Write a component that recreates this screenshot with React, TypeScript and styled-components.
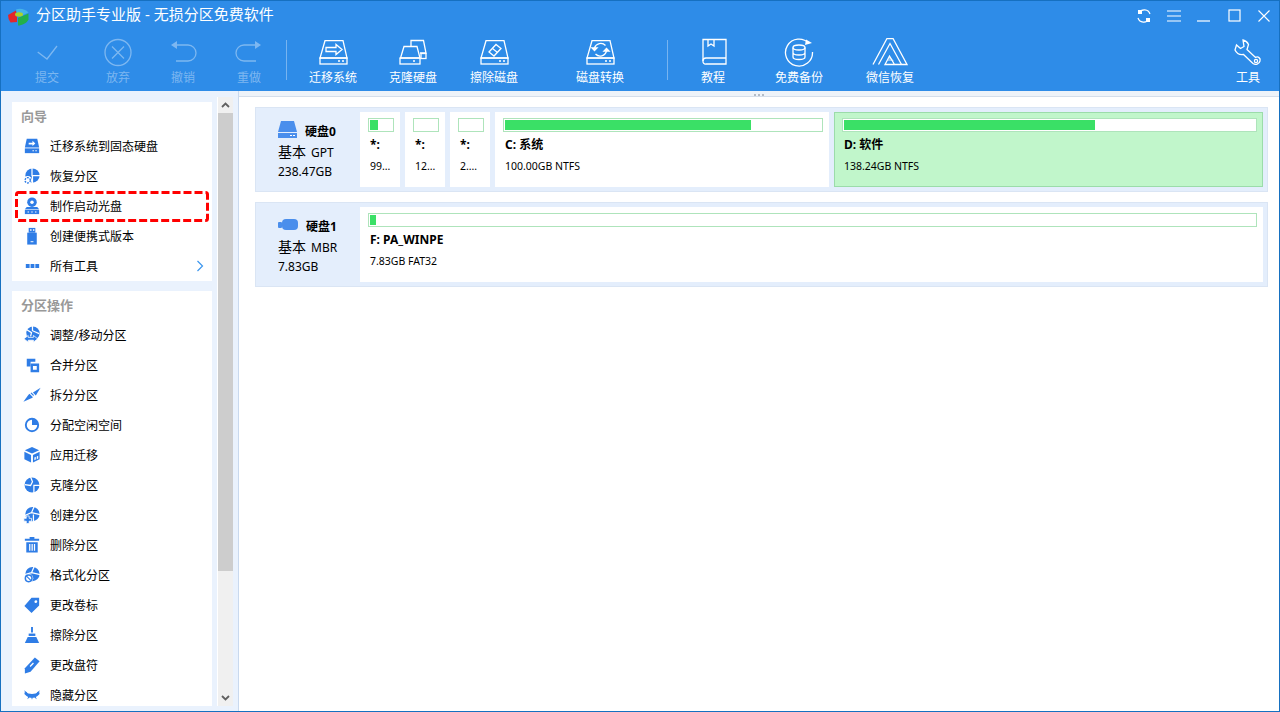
import React from 'react';
import styled, { createGlobalStyle } from 'styled-components';

const FONT = '"Noto Sans", "Noto Sans CJK SC", sans-serif';
const BLUE = '#2e8ce8';
const ICON = '#2f7de6';

const GlobalStyle = createGlobalStyle`
  html, body { margin: 0; padding: 0; height: 100%; overflow: hidden; }
  #root { height: 100%; }
  body { font-family: ${FONT}; font-size: 12px; color: #000; }
  * { box-sizing: border-box; }
`;

const Win = styled.div`
  width: 1280px;
  height: 712px;
  display: flex;
  flex-direction: column;
  border: 1px solid #1670c0;
  overflow: hidden;
`;
const Header = styled.header`
  height: 90px;
  flex: none;
  background: ${BLUE};
  display: flex;
  flex-direction: column;
`;
const TitleBar = styled.div`
  height: 29px;
  display: flex;
  align-items: center;
  padding: 0 0 0 6px;
`;
const Logo = styled.svg`
  width: 22px;
  height: 18px;
  margin: 3px 7px 0 0;
`;
const Title = styled.div`
  color: #fff;
  font-size: 15px;
  flex: 1;
  white-space: pre;
  margin-bottom: 5px;
`;
const WinBtn = styled.button`
  width: 30px;
  height: 28px;
  padding: 0;
  border: 0;
  background: none;
  display: flex;
  align-items: center;
  justify-content: center;
`;
const Toolbar = styled.div`
  flex: 1;
  display: flex;
  padding: 0 1px 0 11px;
  align-items: flex-start;
`;
const Tool = styled.div<{ $w: number; $off?: boolean; $end?: boolean }>`
  width: ${p => p.$w}px;
  flex: none;
  display: flex;
  flex-direction: column;
  align-items: center;
  color: ${p => (p.$off ? 'rgba(255,255,255,.38)' : '#fff')};
  margin-left: ${p => (p.$end ? 'auto' : '0')};
  font-size: 12px;
  svg { display: block; margin-top: 8px; }
`;
const ToolLabel = styled.span`
  line-height: 16px;
  margin-top: 2px;
`;
const Sep = styled.div<{ $ml?: number }>`
  width: 1px;
  height: 40px;
  margin: 10px 0 0 ${p => p.$ml || 0}px;
  background: rgba(255, 255, 255, 0.35);
  flex: none;
`;
const Body = styled.div`
  flex: 1;
  min-height: 0;
  display: flex;
`;
const Sidebar = styled.aside`
  width: 238px;
  flex: none;
  background: #eaf2fd;
  border-right: 1px solid #c9d9ee;
  display: flex;
  padding: 6px 5px 5px 11px;
`;
const Cards = styled.div`
  width: 200px;
  flex: none;
  padding-top: 5px;
  margin-right: 5px;
  display: flex;
  flex-direction: column;
  gap: 10px;
  min-height: 0;
`;
const Card = styled.section<{ $fill?: boolean }>`
  background: #fff;
  flex: ${p => (p.$fill ? '1' : 'none')};
  min-height: 0;
  overflow: hidden;
`;
const CardTitle = styled.div`
  height: 29px;
  line-height: 28px;
  padding-left: 9px;
  color: #999;
  font-size: 13px;
  font-weight: 700;
`;
const Row = styled.div`
  position: relative;
  height: 30px;
  display: flex;
  align-items: center;
  gap: 8px;
  padding: 0 8px 0 10px;
  white-space: nowrap;
`;
const RowIcon = styled.svg`
  width: 20px;
  height: 20px;
  flex: none;
  fill: ${ICON};
`;
const Marker = styled.svg`
  position: absolute;
  left: 3px;
  top: 0;
`;
const More = styled.svg`
  margin-left: auto;
`;
const Scroll = styled.div`
  width: 16px;
  flex: none;
  display: flex;
  flex-direction: column;
  background: #f0f0f0;
  border-left: 1px solid #fff;
`;
const ScrollBtn = styled.div`
  height: 16px;
  flex: none;
  display: flex;
  align-items: center;
  justify-content: center;
`;
const Thumb = styled.div`
  height: 458px;
  flex: none;
  background: #cdcdcd;
`;
const ScrollTrack = styled.div`
  flex: 1;
`;
const Main = styled.main`
  flex: 1;
  min-width: 0;
  background: #fff;
  display: flex;
  flex-direction: column;
`;
const Grip = styled.div`
  height: 6px;
  flex: none;
  background: #eef3f9;
  border-bottom: 1px solid #d5deea;
  display: flex;
  align-items: center;
  justify-content: center;
  gap: 2px;
  padding-top: 2px;
  i {
    width: 2px;
    height: 2px;
    background: #b4bcc6;
  }
`;
const Disks = styled.div`
  padding: 10px 11px 0 16px;
  display: flex;
  flex-direction: column;
  gap: 10px;
`;
const DiskRow = styled.div`
  height: 85px;
  background: #e4eefc;
  border: 1px solid #dae5f4;
  padding: 4px;
  display: flex;
`;
const DiskInfo = styled.div`
  width: 100px;
  flex: none;
  padding: 7px 0 0 18px;
  line-height: 19px;
  white-space: nowrap;
`;
const DiskName = styled.div`
  display: flex;
  align-items: center;
  gap: 8px;
  height: 21px;
  b {
    font-size: 12px;
    margin-top: 4px;
  }
`;
const DiskType = styled.div`
  margin-top: 2px;
  font-size: 12px;
  & + & {
    margin-top: 0;
  }
  span {
    font-size: 14px;
    margin-right: 5px;
  }
`;
const Parts = styled.div`
  flex: 1;
  min-width: 0;
  display: flex;
  gap: 5px;
`;
const Part = styled.div<{ $w?: number; $selected?: boolean }>`
  flex: ${p => (p.$w ? `0 0 ${p.$w}px` : '1')};
  background: ${p => (p.$selected ? '#c1f6cb' : '#fff')};
  border: ${p => (p.$selected ? '1px solid #9bdcaa' : '0')};
  padding: ${p => (p.$selected ? '5px 5px 0 7px' : '6px 6px 0 8px')};
  min-width: 0;
`;
const Bar = styled.div`
  height: 14px;
  border: 1px solid #aee4bb;
  background: #fff;
  padding: 1px;
`;
const Fill = styled.div`
  height: 100%;
  background: #3ae066;
`;
const PartName = styled.div`
  margin: 5px 0 0 2px;
  line-height: 16px;
  font-weight: 700;
  font-size: 12px;
  white-space: nowrap;
`;
const PartSize = styled.div`
  margin: 5px 0 0 2px;
  line-height: 16px;
  font-size: 10.5px;
  white-space: nowrap;
`;

const S = { fill: 'none', stroke: 'currentColor', strokeWidth: 1.3 };

const DiskShell = ({ children }: { children?: React.ReactNode }) => (
  <svg width="32" height="30" viewBox="0 0 32 30" {...S}>
    <path d="M8 2.700H26L30 20H3Z" />
    <rect x="3" y="20" width="27" height="6" />
    <path d="M21 23h2M25 23h2" />
    {children}
  </svg>
);

const toolIcons: Record<string, React.ReactNode> = {
  check: <svg width="32" height="30" viewBox="0 0 32 30" {...S}><path d="M6.700 14L16 21L26 8" /></svg>,
  cancel: <svg width="32" height="30" viewBox="0 0 32 30" {...S}><circle cx="16" cy="14.500" r="13" /><path d="M10 8.500L22 20.500M22 8.500L10 20.500" /></svg>,
  undo: <svg width="32" height="30" viewBox="0 0 32 30" {...S}><path d="M10 7H21a8 8 0 0 1 0 16H9" /><path d="M4 7L10 3V11Z" fill="currentColor" stroke="none" /></svg>,
  redo: <svg width="32" height="30" viewBox="0 0 32 30" {...S}><path d="M22 7H11a8 8 0 0 0 0 16H23" /><path d="M28 7L22 3V11Z" fill="currentColor" stroke="none" /></svg>,
  migrate: <DiskShell><path d="M9 9.500H19V6.500L25 11.500L19 16.500V13.500H9Z" /></DiskShell>,
  clone: (
    <svg width="32" height="30" viewBox="0 0 32 30" {...S}>
      <path d="M7 8.500H20L23 20H3.500Z" />
      <rect x="3" y="20" width="20" height="6" />
      <path d="M16 23h2" />
      <path d="M14 8V2.500H26.500L29 15H23" />
      <rect x="24" y="15.500" width="5" height="5" />
    </svg>
  ),
  wipe: <DiskShell><path d="M11 14L18 6.500L23 10.500L16 18Z" /><path d="M14.500 10.500L19.500 14.500" /></DiskShell>,
  convert: <DiskShell><path d="M10.500 10a6.500 6.500 0 0 1 11-2.500M22.500 13a6.500 6.500 0 0 1-11 3" /><path d="M8 10h5l-2.500 2.500ZM25 13h-5l2.500-2.500Z" fill="currentColor" /></DiskShell>,
  book: <svg width="32" height="30" viewBox="0 0 32 30" {...S}><path d="M8 1.500H29V26H9a2.500 2.500 0 0 1-3-3V1.500Z" /><path d="M11 1.500V8l3-2 3 2V1.500M29 20H9a3 3 0 0 0-3 3" /></svg>,
  backup: (
    <svg width="32" height="30" viewBox="0 0 32 30" {...S}>
      <path d="M26 5.500A13.500 13.500 0 1 0 29.500 14" />
      <path d="M23 1.500L29 5L22 7Z" fill="currentColor" stroke="none" />
      <ellipse cx="16" cy="9.500" rx="6" ry="2.500" />
      <path d="M10 9.500V19c0 1.500 2.500 2.500 6 2.500s6-1 6-2.500V9.500M10 14.500c0 1.500 2.500 2.500 6 2.500s6-1 6-2.500" />
    </svg>
  ),
  wechat: (
    <svg width="36" height="30" viewBox="0 0 36 30" {...S}>
      <path d="M1 26.500L15 0.500H21L35 26.500H13L17.500 18L22.500 26.500" />
      <path d="M6.500 26.500L18 5.500L29.500 26.500" />
      <path d="M17.500 18L22 23H15.500Z" fill="currentColor" fillOpacity="0.45" stroke="none" />
    </svg>
  ),
  tools: <svg width="32" height="30" viewBox="0 0 32 30" {...S}><path d="M11 2a8 8 0 0 1 5.500 4.500L15 11.500l8.500 8a3 3 0 0 1 4.500 3.500a4.500 4.500 0 0 1-7 2.500L11.500 16.500A8 8 0 0 1 3 12L4.500 7l4 3.500L12 8.500Z" /><circle cx="24" cy="23" r="1.600" /></svg>,
};

const Crack = ({ d }: { d: string }) => <path d={d} fill="none" stroke="#fff" strokeWidth="1.300" />;

const rowIcons: Record<string, React.ReactNode> = {
  migrate: <><path d="M5 3H16L18 12H3Z" /><rect x="3" y="13" width="15" height="5" /><path d="M7 7H11V5L14 7.800L11 10.500V9H7Z" fill="#fff" /><path d="M11 15h1.500v1H11ZM14 15h1.500v1H14Z" fill="#fff" /></>,
  recover: <><circle cx="11" cy="10" r="7.500" /><Crack d="M10.500 2V10H19M11 10V18" /><circle cx="6" cy="15" r="4.500" fill="#fff" /><circle cx="6" cy="15" r="2.800" fill="none" stroke={ICON} strokeWidth="1.500" strokeDasharray="2 1" /></>,
  boot: <><circle cx="10.500" cy="6.500" r="5" /><circle cx="10.500" cy="6.500" r="1.800" fill="#fff" /><path d="M5 11.500H16L18 14H3Z" /><rect x="3" y="14.500" width="15" height="4.500" /><path d="M6 16h1v1.500H6ZM10 16h1v1.500h-1ZM14 16h1v1.500h-1Z" fill="#fff" /></>,
  usb: <><path d="M7 2h7v5h-7Z" /><path d="M8.500 3.500h1.500v1.500h-1.500ZM11.500 3.500h1.500v1.500h-1.500Z" fill="#fff" /><rect x="5.500" y="7" width="10" height="12.500" /><rect x="9" y="16" width="3" height="1" fill="#fff" /></>,
  more: <path d="M4 8.500h4v4H4ZM9 8.500h4v4H9ZM14 8.500h4v4h-4Z" />,
  resize: <><circle cx="11.500" cy="8.500" r="7" /><Crack d="M5 5L10 8L9 12M11 1V6L18 9" /><path d="M2 14.500L6.500 11V13H12V11L16.500 14.500L12 18V16H6.500V18Z" stroke="#fff" strokeWidth="0.800" /></>,
  merge: <><path d="M5 4h9v3h-5v5H5Z" /><path d="M9 9H18V18H9ZM11.500 11.500V15.500H15.500V11.500Z" fillRule="evenodd" /></>,
  split: <><path d="M1.500 17.500L7 10L10 8L12.500 10.500L11 13.500Z" /><path d="M11.500 8L19.500 3L14.500 11Z" /><Crack d="M6.500 7L13.500 14" /></>,
  alloc: <><circle cx="10.500" cy="10.500" r="6.500" fill="none" stroke={ICON} strokeWidth="2" /><path d="M10.500 10.500V4A6.500 6.500 0 0 1 17 10.500Z" /></>,
  app: <><path d="M10.500 2L18 5.500L10.500 9L3 5.500Z" /><path d="M2.500 7L9.500 10.500V18.500L2.500 15Z" /><path d="M18.500 7L11.500 10.500V18.500L18.500 15Z" /><path d="M13 13l1.500-.7v3l-1.500.7ZM15.500 12l1.500-.7v3l-1.500.7Z" fill="#fff" /></>,
  clone: <><circle cx="10.500" cy="10.500" r="7.800" /><Crack d="M9 2L11 7L9 11L3 10M19 11H12.500V19" /></>,
  create: <><circle cx="11" cy="9.500" r="7.500" /><Crack d="M13 1L10 8L3 11M10 8L19 10M12 10V17" /><path d="M4.500 11.500H7.500V14H10V17H7.500V19.500H4.500V17H2V14H4.500Z" stroke="#fff" strokeWidth="0.800" /></>,
  delete: <><path d="M8 2H13V4H18V6H3V4H8Z" /><path d="M4.500 7.500H16.500V18.500H4.500ZM7.500 9.500V16.500H8.800V9.500ZM10 9.500V16.500H11.300V9.500ZM12.500 9.500V16.500H13.800V9.500Z" fillRule="evenodd" /></>,
  format: <><circle cx="11" cy="9.500" r="7.500" /><Crack d="M13 1L10 8L3 10M10 8L19 10" /><circle cx="7" cy="14" r="4.800" fill="#fff" /><circle cx="7" cy="14" r="3.500" fill="none" stroke={ICON} strokeWidth="1.600" /><path d="M4.500 11.500L9.500 16.500" stroke={ICON} strokeWidth="1.200" /></>,
  label: <path d="M10 3H18V11L10 19L2.500 11.500ZM14.500 5.500A1.500 1.500 0 1 0 14.600 8.500A1.500 1.500 0 0 0 14.500 5.500Z" fillRule="evenodd" />,
  wipe: <><path d="M9.500 2h2v6h-2Z" /><path d="M7 9h7v2.500H7Z" /><path d="M6 12.500h9L18 19H3Z" /></>,
  letter: <><path d="M13.500 2.500L18.500 6.500L9 17.500L3 19.500L3 14Z" /><path d="M8 11.500l3.500-3.500 1 1-3.500 3.500Z" fill="#fff" /></>,
  hide: <><path d="M3 7Q10.500 12 18 7L18.500 9.500Q16 12 14.500 12.500L15.500 15L13 13.200Q12 13.500 11.200 13.500L10.500 15.500L9.800 13.500Q9 13.500 8 13.200L5.500 15L6.500 12.500Q5 12 2.500 9.500Z" /><path d="M2 5.500L5.500 8L4.500 9.500ZM19 5.500L15.500 8L16.500 9.500Z" /></>,
};

const wizard = [
  { icon: 'migrate', text: '迁移系统到固态硬盘' },
  { icon: 'recover', text: '恢复分区' },
  { icon: 'boot', text: '制作启动光盘', marked: true },
  { icon: 'usb', text: '创建便携式版本' },
  { icon: 'more', text: '所有工具', more: true },
];
const operations = [
  { icon: 'resize', text: '调整/移动分区' },
  { icon: 'merge', text: '合并分区' },
  { icon: 'split', text: '拆分分区' },
  { icon: 'alloc', text: '分配空闲空间' },
  { icon: 'app', text: '应用迁移' },
  { icon: 'clone', text: '克隆分区' },
  { icon: 'create', text: '创建分区' },
  { icon: 'delete', text: '删除分区' },
  { icon: 'format', text: '格式化分区' },
  { icon: 'label', text: '更改卷标' },
  { icon: 'wipe', text: '擦除分区' },
  { icon: 'letter', text: '更改盘符' },
  { icon: 'hide', text: '隐藏分区' },
];

type Item = { icon: string; text: string; marked?: boolean; more?: boolean };

const SideRow = ({ item }: { item: Item }) => (
  <Row>
    <RowIcon viewBox="0 0 21 21">{rowIcons[item.icon]}</RowIcon>
    {item.text}
    {item.more && (
      <More width="8" height="12" viewBox="0 0 8 12" fill="none" stroke="#3c96ee" strokeWidth="1.200">
        <path d="M1.500 1L6.500 6L1.500 11" />
      </More>
    )}
    {item.marked && (
      <Marker width="194" height="31" viewBox="0 0 194 31" fill="none" stroke="#f00" strokeWidth="3">
        <rect x="1.500" y="1.500" width="191" height="28" rx="2" strokeDasharray="8 3" />
      </Marker>
    )}
  </Row>
);

const PartBox = ({ w, pct, name, size, selected }: { w?: number; pct: number; name: string; size: string; selected?: boolean }) => (
  <Part $w={w} $selected={selected}>
    <Bar>
      {pct > 0 && <Fill style={{ width: `${pct}%` }} />}
    </Bar>
    <PartName>{name}</PartName>
    <PartSize>{size}</PartSize>
  </Part>
);

const Chevron = ({ up }: { up?: boolean }) => (
  <svg width="9" height="6" viewBox="0 0 9 6" fill="none" stroke="#606060" strokeWidth="1.800">
    <path d={up ? 'M1 5L4.500 1.500L8 5' : 'M1 1L4.500 4.500L8 1'} />
  </svg>
);

export default function App() {
  return (
    <Win>
      <GlobalStyle />
      <Header>
        <TitleBar>
          <Logo viewBox="0 0 22 18">
            <path d="M1 7L9 2.500L10 10L10 14L3.500 14.500Q1 11 1 7Z" fill="#e3262a" />
            <path d="M9 1.500C13 0 18 1 21.500 4.500L14 8L10 5Z" fill="#45b4e8" />
            <ellipse cx="12" cy="6.500" rx="4" ry="2.200" fill="#a8d42c" />
            <path d="M11 10L21.500 5.500V11.500C20 15 15 17.500 11 17.500Z" fill="#22b04a" />
          </Logo>
          <Title>分区助手专业版 - 无损分区免费软件</Title>
          <WinBtn>
            <svg width="16" height="16" viewBox="0 0 16 16" fill="none" stroke="#fff" strokeWidth="1.200">
              <path d="M3 5A6 6 0 0 1 14 6M13 11A6 6 0 0 1 2 10" />
              <path d="M2 2h4v4H2ZM10 10h4v4h-4Z" fill="#fff" stroke="none" />
            </svg>
          </WinBtn>
          <WinBtn>
            <svg width="14" height="12" viewBox="0 0 14 12" stroke="#fff" strokeWidth="1.200"><path d="M0 1H14M0 6H14M0 11H14" /></svg>
          </WinBtn>
          <WinBtn>
            <svg width="14" height="14" viewBox="0 0 14 14" stroke="#fff" strokeWidth="1.200"><path d="M0 12H13" /></svg>
          </WinBtn>
          <WinBtn>
            <svg width="13" height="13" viewBox="0 0 13 13" fill="none" stroke="#fff" strokeWidth="1.200"><rect x="1" y="1" width="11" height="11" /></svg>
          </WinBtn>
          <WinBtn>
            <svg width="12" height="12" viewBox="0 0 12 12" stroke="#fff" strokeWidth="1.100"><path d="M0.500 0.500L11.500 11.500M11.500 0.500L0.500 11.500" /></svg>
          </WinBtn>
        </TitleBar>
        <Toolbar>
          <Tool $w={70} $off>{toolIcons.check}<ToolLabel>提交</ToolLabel></Tool>
          <Tool $w={72} $off>{toolIcons.cancel}<ToolLabel>放弃</ToolLabel></Tool>
          <Tool $w={58} $off>{toolIcons.undo}<ToolLabel>撤销</ToolLabel></Tool>
          <Tool $w={74} $off>{toolIcons.redo}<ToolLabel>重做</ToolLabel></Tool>
          <Sep />
          <Tool $w={92}>{toolIcons.migrate}<ToolLabel>迁移系统</ToolLabel></Tool>
          <Tool $w={68}>{toolIcons.clone}<ToolLabel>克隆硬盘</ToolLabel></Tool>
          <Tool $w={94}>{toolIcons.wipe}<ToolLabel>擦除磁盘</ToolLabel></Tool>
          <Tool $w={118}>{toolIcons.convert}<ToolLabel>磁盘转换</ToolLabel></Tool>
          <Sep $ml={8} />
          <Tool $w={90}>{toolIcons.book}<ToolLabel>教程</ToolLabel></Tool>
          <Tool $w={82}>{toolIcons.backup}<ToolLabel>免费备份</ToolLabel></Tool>
          <Tool $w={100}>{toolIcons.wechat}<ToolLabel>微信恢复</ToolLabel></Tool>
          <Tool $w={60} $end>{toolIcons.tools}<ToolLabel>工具</ToolLabel></Tool>
        </Toolbar>
      </Header>
      <Body>
        <Sidebar>
          <Cards>
            <Card>
              <CardTitle>向导</CardTitle>
              {wizard.map(item => <SideRow key={item.text} item={item} />)}
            </Card>
            <Card $fill>
              <CardTitle>分区操作</CardTitle>
              {operations.map(item => <SideRow key={item.text} item={item} />)}
            </Card>
          </Cards>
          <Scroll>
            <ScrollBtn><Chevron up /></ScrollBtn>
            <Thumb />
            <ScrollTrack />
            <ScrollBtn><Chevron /></ScrollBtn>
          </Scroll>
        </Sidebar>
        <Main>
          <Grip><i /><i /><i /></Grip>
          <Disks>
            <DiskRow>
              <DiskInfo>
                <DiskName>
                  <svg width="19" height="17" viewBox="0 0 19 17" fill="#4a8eec">
                    <path d="M3 0H16L19 11H0Z" /><rect x="0" y="12" width="19" height="5" />
                    <path d="M12 14h2v1h-2ZM15 14h2v1h-2Z" fill="#fff" />
                  </svg>
                  <b>硬盘0</b>
                </DiskName>
                <DiskType><span>基本</span>GPT</DiskType>
                <DiskType>238.47GB</DiskType>
              </DiskInfo>
              <Parts>
                <PartBox w={40} pct={36} name="*:" size="99…" />
                <PartBox w={40} pct={0} name="*:" size="12…" />
                <PartBox w={40} pct={0} name="*:" size="2.…" />
                <PartBox w={334} pct={78} name="C: 系统" size="100.00GB NTFS" />
                <PartBox pct={61} name="D: 软件" size="138.24GB NTFS" selected />
              </Parts>
            </DiskRow>
            <DiskRow>
              <DiskInfo>
                <DiskName>
                  <svg width="20" height="12" viewBox="0 0 20 12" fill="#4a8eec">
                    <rect x="0" y="3" width="4" height="6" rx="1" /><rect x="4" y="0" width="16" height="11" rx="4" />
                  </svg>
                  <b>硬盘1</b>
                </DiskName>
                <DiskType><span>基本</span>MBR</DiskType>
                <DiskType>7.83GB</DiskType>
              </DiskInfo>
              <Parts>
                <PartBox pct={0.7} name="F: PA_WINPE" size="7.83GB FAT32" />
              </Parts>
            </DiskRow>
          </Disks>
        </Main>
      </Body>
    </Win>
  );
}
